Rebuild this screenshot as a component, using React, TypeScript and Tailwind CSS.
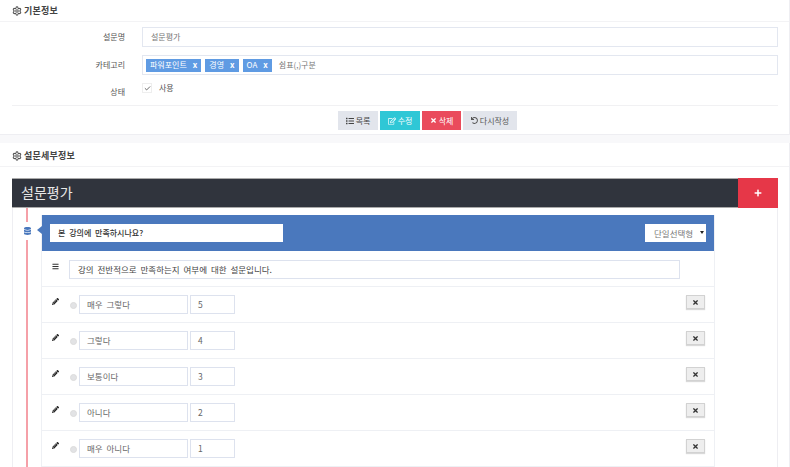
import { Settings, Check } from 'lucide-react';
import { FaBars, FaDatabase, FaPencilAlt, FaPlus, FaRegEdit, FaTimes, FaUndo, FaList } from 'react-icons/fa';

const font = 'font-["Noto_Sans_CJK_KR","Noto_Sans",sans-serif]';

const answers = [
  { label: '매우 그렇다', score: 5 },
  { label: '그렇다', score: 4 },
  { label: '보통이다', score: 3 },
  { label: '아니다', score: 2 },
  { label: '매우 아니다', score: 1 },
];

function PanelTitle({ title }: { title: string }) {
  return (
    <div className="flex items-center gap-[2px] h-[22px] pl-[12px] border-b border-[#f3f3f5]">
      <Settings className="w-[10px] h-[10px] text-[#555]" strokeWidth={2.5} />
      <span className="text-[9px] font-bold text-[#444] tracking-[0.2px]">{title}</span>
    </div>
  );
}

function Tag({ label }: { label: string }) {
  return (
    <span className="flex items-center gap-[6px] h-[13px] px-[4px] bg-[#5f9be3] text-white text-[8px] leading-none">
      {label}
      <span className="font-bold text-[8px]">x</span>
    </span>
  );
}

function ActionButton({ className, icon, label }: { className: string; icon: React.ReactNode; label: string }) {
  return (
    <button className={`flex items-center justify-center gap-[2px] h-[19px] text-[8px] leading-none ${className}`}>
      {icon}
      {label}
    </button>
  );
}

function AnswerRow({ label, score }: { label: string; score: number }) {
  return (
    <div className="flex h-[36px] border-b border-[#eef0f4] pl-[10px] pr-[9px] pt-[8px]">
      <FaPencilAlt className="w-[7px] h-[7px] mt-[3px] text-[#222]" />
      <span className="w-[7px] h-[7px] rounded-full bg-[#e2e3e5] border border-[#dcdcdc] ml-[11px] mt-[7px]" />
      <div className="flex items-center w-[109px] h-[19px] ml-[2px] px-[7px] border border-[#dde2ee] bg-white text-[8.5px] [word-spacing:2px] text-[#666]">
        {label}
      </div>
      <div className="flex items-center w-[45px] h-[19px] ml-[2px] px-[7px] border border-[#dde2ee] bg-white text-[8.5px] text-[#666]">
        {score}
      </div>
      <button className="flex items-center justify-center ml-auto w-[19px] h-[14px] bg-[#eeeeee] border border-[#d2d2d2] shadow-[0_1px_1px_rgba(0,0,0,0.15)]">
        <FaTimes className="w-[7px] h-[7px] text-[#333]" />
      </button>
    </div>
  );
}

export default function App() {
  return (
    <div className={`w-[790px] h-[467px] overflow-hidden bg-[#f8f8fa] ${font}`}>
      {/* 기본정보 */}
      <section className="h-[135px] bg-white border-b border-r border-[#eeeef2]">
        <PanelTitle title="기본정보" />
        <div className="flex flex-col pt-[5px] pl-[12px] pr-[11px]">
          <div className="flex items-center h-[20px]">
            <label className="w-[114px] pr-px text-right text-[8px] text-[#555]">설문명</label>
            <div className="flex items-center flex-1 h-[20px] ml-[16px] px-[8px] border border-[#e3e7f0] text-[8px] text-[#777]">설문평가</div>
          </div>
          <div className="flex items-center h-[20px] mt-[8px]">
            <label className="w-[114px] pr-px text-right text-[8px] text-[#555]">카테고리</label>
            <div className="flex items-center flex-1 gap-[4px] h-[20px] ml-[16px] pl-[3px] border border-[#e3e7f0]">
              <Tag label="파워포인트" />
              <Tag label="경영" />
              <Tag label="OA" />
              <span className="ml-[3px] text-[8px] text-[#777]">쉼표(,)구분</span>
            </div>
          </div>
          <div className="flex h-[23px] mt-[8px]">
            <label className="w-[114px] pr-px pt-[3px] text-right text-[8px] text-[#555]">상태</label>
            <div className="flex items-start ml-[16px]">
              <span className="flex items-center justify-center w-[10px] h-[10px] border border-[#eeeeee]">
                <Check className="w-[7px] h-[7px] text-[#555]" strokeWidth={3} />
              </span>
              <span className="ml-[7px] -mt-[1px] text-[8px] text-[#555]">사용</span>
            </div>
          </div>
          <div className="flex justify-center gap-[2px] -mt-[1px] pt-[5px] pl-[65px] border-t border-[#f1f1f3]">
            <ActionButton className="w-[40px] bg-[#e2e5ec] text-[#444]" icon={<FaList className="w-[8px] h-[8px]" />} label="목록" />
            <ActionButton className="w-[40px] bg-[#2fc7d6] text-white" icon={<FaRegEdit className="w-[8px] h-[8px]" />} label="수정" />
            <ActionButton className="w-[39px] bg-[#ea4b5c] text-white" icon={<FaTimes className="w-[7px] h-[7px]" />} label="삭제" />
            <ActionButton className="w-[54px] bg-[#e2e5ec] text-[#555]" icon={<FaUndo className="w-[7px] h-[7px]" />} label="다시작성" />
          </div>
        </div>
      </section>

      {/* 설문세부정보 */}
      <section className="mt-[8px] h-[324px] bg-white border-r border-[#eeeef2] pt-[2px]">
        <PanelTitle title="설문세부정보" />
        <div className="ml-[12px] mr-[11px] mt-[11px] border-r border-l border-[#eeeef2] h-[290px] flex flex-col">
          <div className="flex shrink-0 h-[30px] -mx-px bg-[#30343d] border-y border-[#aaa]">
            <h2 className="flex-1 pl-[9px] text-[14px] leading-[27px] text-[#e8e8e8]">설문평가</h2>
            <button className="flex items-center justify-center w-[40px] h-[30px] -mt-px bg-[#e63748]">
              <FaPlus className="w-[8px] h-[8px] text-white" />
            </button>
          </div>

          <div className="relative flex-1 pl-[28px] pt-[7px]">
            {/* timeline */}
            <div className="absolute left-[13px] top-0 bottom-0 w-[2px] bg-[#f5a0a8]" />
            <div className="absolute left-[8px] top-[14px] h-[18px] w-[12px] flex items-center justify-center bg-white">
              <FaDatabase className="w-[7px] h-[8px] text-[#4a78bd]" />
            </div>

            <div className="relative w-[674px] border-x border-[#eef0f4]">
              <span className="absolute -left-[5px] top-[11px] border-y-[4px] border-r-[5px] border-y-transparent border-r-[#4a78bd]" />
              <div className="flex justify-between items-center h-[36px] px-[8px] bg-[#4a78bd]">
                <div className="flex items-center w-[233px] h-[18px] px-[8px] bg-white text-[8px] [word-spacing:2px] font-medium text-[#333]">본 강의에 만족하시나요?</div>
                <div className="relative flex items-center w-[61px] h-[18px] pl-[9px] bg-white text-[8.5px] text-[#777]">
                  단일선택형
                  <span className="absolute right-[2px] top-[7px] border-x-[2px] border-t-[3px] border-x-transparent border-t-[#222]" />
                </div>
              </div>
              <div className="flex h-[36px] border-b border-[#eef0f4] pl-[10px] pt-[9px]">
                <FaBars className="w-[7px] h-[7px] mt-[3px] text-[#333]" />
                <div className="flex items-center w-[611px] h-[19px] ml-[10px] px-[8px] border border-[#dde2ee] bg-white text-[8.5px] [word-spacing:2px] text-[#444]">
                  강의 전반적으로 만족하는지 여부에 대한 설문입니다.
                </div>
              </div>
              {answers.map(a => (
                <AnswerRow key={a.score} label={a.label} score={a.score} />
              ))}
            </div>
          </div>
        </div>
      </section>
    </div>
  );
}
